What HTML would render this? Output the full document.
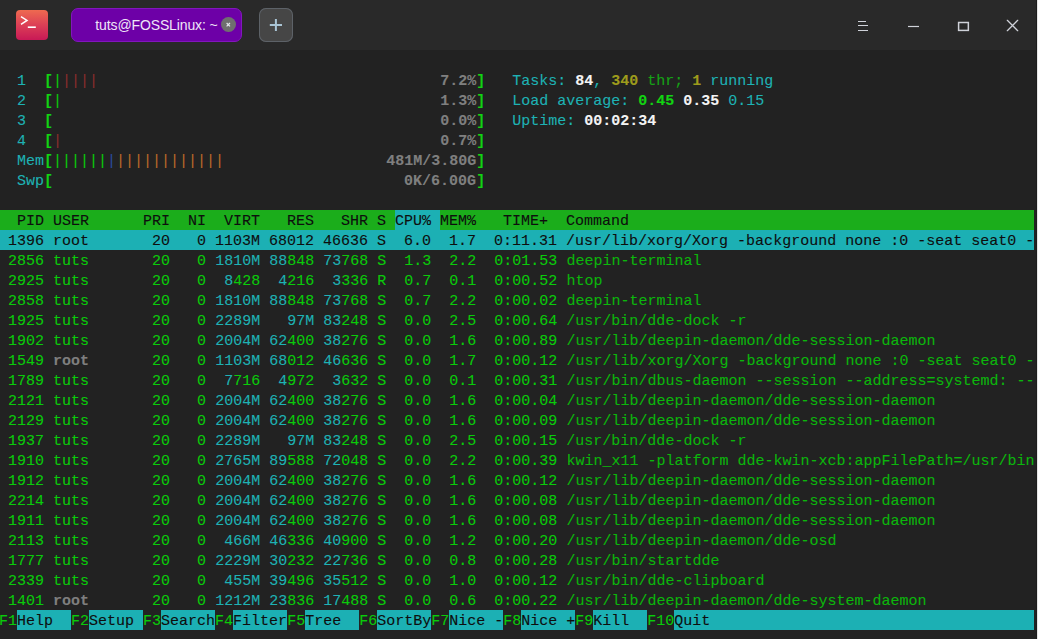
<!DOCTYPE html>
<html><head><meta charset="utf-8"><style>
html,body{margin:0;padding:0;}
body{width:1038px;height:639px;overflow:hidden;background:#222222;position:relative;}
#titlebar{position:absolute;left:0;top:0;width:1038px;height:50px;background:#292929;}
#edge{position:absolute;left:1036px;top:0;width:1px;height:639px;background:#1c1c1c;border-right:1px solid #e6e6e6;}
#term{position:absolute;left:-1px;top:0;width:1036px;height:639px;}
.row{position:absolute;left:0;height:20px;width:1035px;font-family:"Liberation Mono",monospace;font-size:15px;-webkit-text-stroke:0.1px currentColor;line-height:24px;white-space:pre;color:#0acb0a;}
.row.sel{background:#1cb0b4;}
.row.hdr{background:#1bad1b;}
.hc{background:#1cb0b4;}
.k{color:#0e0e0e;}
.kc{color:#0e0e0e;background:#1cb0b4;}
.g{color:#0acb0a;}
.gt{color:#16a216;}
.gb{color:#12d412;font-weight:bold;}
.gbb{color:#12d412;font-weight:bold;}
.ct{color:#1eb2b4;}
.gy{color:#7f7f7f;font-weight:bold;}
.gyb{color:#7f7f7f;font-weight:bold;}
.r{color:#8a2d2d;}
.o{color:#b8692a;}
.b{color:#2a4a9c;}
.ob{color:#9e9c1c;font-weight:bold;}
.wb{color:#f4f4f4;font-weight:bold;}
#appicon{position:absolute;left:16px;top:10px;width:32px;height:30px;border-radius:4px;background:linear-gradient(180deg,#ee6a50 0%,#dc3f56 50%,#c81956 100%);}
#appicon svg{position:absolute;left:0;top:0;}
#tab{position:absolute;left:71px;top:8px;width:169px;height:32px;border-radius:7px;background:#6d00a7;border:1px solid #8216bd;}
#tabtxt{position:absolute;left:23.3px;top:0;line-height:32px;font-family:"Liberation Sans",sans-serif;font-size:14px;letter-spacing:-0.12px;color:#efe6f7;white-space:pre;}
#tabclose{position:absolute;left:148.8px;top:8.2px;width:15px;height:15px;border-radius:50%;background:#6f6f6f;}
#tabclose svg{position:absolute;left:0;top:0;}
#addtab{position:absolute;left:259px;top:8px;width:34px;height:34px;border-radius:7px;background:#464646;box-shadow:inset 0 0 0 1px #5d6268;}
#addtab svg{position:absolute;left:0;top:0;}
.bk{position:absolute;height:20px;}
.cyb{background:#1cb0b4;}
.gc{color:#0cb60c;}

</style></head><body>
<div id="titlebar">
<div id="appicon"><svg width="32" height="30" viewBox="0 0 32 30"><path d="M5 6.6 L11 10.4 L5 14.3" fill="none" stroke="#fff" stroke-width="1.5" stroke-linejoin="miter"/><rect x="11.8" y="16.4" width="8" height="1.6" fill="#fff"/></svg></div>
<div id="tab"><span id="tabtxt">tuts@FOSSLinux: ~</span><div id="tabclose"><svg width="15" height="15" viewBox="0 0 15 15"><path d="M5.6 6.0 L9.0 9.4 M9.0 6.0 L5.6 9.4" stroke="#e4e6ec" stroke-width="1.15"/></svg></div></div>
<div id="addtab"><svg width="34" height="34" viewBox="0 0 34 34"><path d="M16.9 10.9 V23.1 M10.8 17 H23" stroke="#a9c4d4" stroke-width="2"/></svg></div>
<svg id="wctl" width="180" height="50" viewBox="850 0 180 50" style="position:absolute;left:850px;top:0">
<path d="M858 21.5 H866 M858 25.5 H868 M858 30.5 H868" stroke="#cfd2d9" stroke-width="1.1"/>
<path d="M908 26.5 H919" stroke="#cfd2d9" stroke-width="1.2"/>
<rect x="958.6" y="22.5" width="9.75" height="7.9" fill="none" stroke="#cfd2d9" stroke-width="1.5"/>
<path d="M1007.3 20.3 L1017.7 30.7 M1017.7 20.3 L1007.3 30.7" stroke="#cfd2d9" stroke-width="1.25" stroke-linecap="round"/>
</svg>
</div>
<div id="edge"></div>

<div id="term">
<div class="row hdr" style="top:210px"></div><div class="bk cyb" style="top:610px;left:18px;width:54px"></div><div class="bk cyb" style="top:610px;left:90px;width:54px"></div><div class="bk cyb" style="top:610px;left:162px;width:54px"></div><div class="bk cyb" style="top:610px;left:234px;width:54px"></div><div class="bk cyb" style="top:610px;left:306px;width:54px"></div><div class="bk cyb" style="top:610px;left:378px;width:54px"></div><div class="bk cyb" style="top:610px;left:450px;width:54px"></div><div class="bk cyb" style="top:610px;left:522px;width:54px"></div><div class="bk cyb" style="top:610px;left:594px;width:54px"></div><div class="bk cyb" style="top:610px;left:675px;width:360px"></div><div class="bk cyb" style="top:210px;left:396px;width:45px"></div><div class="row" style="top:210px"><span class="k">  PID USER      PRI  NI  VIRT   RES   SHR S CPU% MEM%   TIME+  Command</span></div>
<div class="row" style="top:70px">  <span class="ct">1</span>  <span class="gb">[</span><span class="g">|</span><span class="r">||||</span>                                      <span class="gy">7.2%</span><span class="gb">]</span>   <span class="ct">Tasks: </span><span class="wb">84</span><span class="ct">, </span><span class="ob">340</span><span class="gt"> thr; </span><span class="ob">1</span><span class="ct"> running</span></div>
<div class="row" style="top:90px">  <span class="ct">2</span>  <span class="gb">[</span><span class="g">|</span>                                          <span class="gy">1.3%</span><span class="gb">]</span>   <span class="ct">Load average: </span><span class="gbb">0.45</span> <span class="wb">0.35</span> <span class="ct">0.15</span></div>
<div class="row" style="top:110px">  <span class="ct">3</span>  <span class="gb">[</span>                                           <span class="gy">0.0%</span><span class="gb">]</span>   <span class="ct">Uptime: </span><span class="wb">00:02:34</span></div>
<div class="row" style="top:130px">  <span class="ct">4</span>  <span class="gb">[</span><span class="r">|</span>                                          <span class="gy">0.7%</span><span class="gb">]</span></div>
<div class="row" style="top:150px">  <span class="ct">Mem</span><span class="gb">[</span><span class="g">||||||</span><span class="b">|</span><span class="o">||||||||||||</span>                  <span class="gy">481M/3.80G</span><span class="gb">]</span></div>
<div class="row" style="top:170px">  <span class="ct">Swp</span><span class="gb">[</span>                                       <span class="gy">0K/6.00G</span><span class="gb">]</span></div>
<div class="row sel" style="top:230px"><span class="k"> 1396 root       20   0 1103M 68012 46636 S  6.0  1.7  0:11.31 /usr/lib/xorg/Xorg -background none :0 -seat seat0 -</span></div>
<div class="row" style="top:250px"><span class="g"> 2856</span> <span class="g">tuts     </span> <span class="g"> 20</span> <span class="g">  0</span> <span class="ct">1810M</span> <span class="ct">88</span><span class="g">848</span> <span class="ct">73</span><span class="g">768</span> <span class="g">S</span> <span class="g"> 1.3</span> <span class="g"> 2.2</span> <span class="g"> 0:01.53</span> <span class="gc">deepin-terminal</span></div>
<div class="row" style="top:270px"><span class="g"> 2925</span> <span class="g">tuts     </span> <span class="g"> 20</span> <span class="g">  0</span> <span class="ct"> 8</span><span class="g">428</span> <span class="ct"> 4</span><span class="g">216</span> <span class="ct"> 3</span><span class="g">336</span> <span class="g">R</span> <span class="g"> 0.7</span> <span class="g"> 0.1</span> <span class="g"> 0:00.52</span> <span class="gc">htop</span></div>
<div class="row" style="top:290px"><span class="g"> 2858</span> <span class="g">tuts     </span> <span class="g"> 20</span> <span class="g">  0</span> <span class="ct">1810M</span> <span class="ct">88</span><span class="g">848</span> <span class="ct">73</span><span class="g">768</span> <span class="g">S</span> <span class="g"> 0.7</span> <span class="g"> 2.2</span> <span class="g"> 0:00.02</span> <span class="gc">deepin-terminal</span></div>
<div class="row" style="top:310px"><span class="g"> 1925</span> <span class="g">tuts     </span> <span class="g"> 20</span> <span class="g">  0</span> <span class="ct">2289M</span> <span class="ct">  97M</span> <span class="ct">83</span><span class="g">248</span> <span class="g">S</span> <span class="g"> 0.0</span> <span class="g"> 2.5</span> <span class="g"> 0:00.64</span> <span class="gc">/usr/bin/dde-dock -r</span></div>
<div class="row" style="top:330px"><span class="g"> 1902</span> <span class="g">tuts     </span> <span class="g"> 20</span> <span class="g">  0</span> <span class="ct">2004M</span> <span class="ct">62</span><span class="g">400</span> <span class="ct">38</span><span class="g">276</span> <span class="g">S</span> <span class="g"> 0.0</span> <span class="g"> 1.6</span> <span class="g"> 0:00.89</span> <span class="gc">/usr/lib/deepin-daemon/dde-session-daemon</span></div>
<div class="row" style="top:350px"><span class="g"> 1549</span> <span class="gyb">root     </span> <span class="g"> 20</span> <span class="g">  0</span> <span class="ct">1103M</span> <span class="ct">68</span><span class="g">012</span> <span class="ct">46</span><span class="g">636</span> <span class="g">S</span> <span class="g"> 0.0</span> <span class="g"> 1.7</span> <span class="g"> 0:00.12</span> <span class="gc">/usr/lib/xorg/Xorg -background none :0 -seat seat0 -</span></div>
<div class="row" style="top:370px"><span class="g"> 1789</span> <span class="g">tuts     </span> <span class="g"> 20</span> <span class="g">  0</span> <span class="ct"> 7</span><span class="g">716</span> <span class="ct"> 4</span><span class="g">972</span> <span class="ct"> 3</span><span class="g">632</span> <span class="g">S</span> <span class="g"> 0.0</span> <span class="g"> 0.1</span> <span class="g"> 0:00.31</span> <span class="gc">/usr/bin/dbus-daemon --session --address=systemd: --</span></div>
<div class="row" style="top:390px"><span class="g"> 2121</span> <span class="g">tuts     </span> <span class="g"> 20</span> <span class="g">  0</span> <span class="ct">2004M</span> <span class="ct">62</span><span class="g">400</span> <span class="ct">38</span><span class="g">276</span> <span class="g">S</span> <span class="g"> 0.0</span> <span class="g"> 1.6</span> <span class="g"> 0:00.04</span> <span class="gc">/usr/lib/deepin-daemon/dde-session-daemon</span></div>
<div class="row" style="top:410px"><span class="g"> 2129</span> <span class="g">tuts     </span> <span class="g"> 20</span> <span class="g">  0</span> <span class="ct">2004M</span> <span class="ct">62</span><span class="g">400</span> <span class="ct">38</span><span class="g">276</span> <span class="g">S</span> <span class="g"> 0.0</span> <span class="g"> 1.6</span> <span class="g"> 0:00.09</span> <span class="gc">/usr/lib/deepin-daemon/dde-session-daemon</span></div>
<div class="row" style="top:430px"><span class="g"> 1937</span> <span class="g">tuts     </span> <span class="g"> 20</span> <span class="g">  0</span> <span class="ct">2289M</span> <span class="ct">  97M</span> <span class="ct">83</span><span class="g">248</span> <span class="g">S</span> <span class="g"> 0.0</span> <span class="g"> 2.5</span> <span class="g"> 0:00.15</span> <span class="gc">/usr/bin/dde-dock -r</span></div>
<div class="row" style="top:450px"><span class="g"> 1910</span> <span class="g">tuts     </span> <span class="g"> 20</span> <span class="g">  0</span> <span class="ct">2765M</span> <span class="ct">89</span><span class="g">588</span> <span class="ct">72</span><span class="g">048</span> <span class="g">S</span> <span class="g"> 0.0</span> <span class="g"> 2.2</span> <span class="g"> 0:00.39</span> <span class="gc">kwin_x11 -platform dde-kwin-xcb:appFilePath=/usr/bin</span></div>
<div class="row" style="top:470px"><span class="g"> 1912</span> <span class="g">tuts     </span> <span class="g"> 20</span> <span class="g">  0</span> <span class="ct">2004M</span> <span class="ct">62</span><span class="g">400</span> <span class="ct">38</span><span class="g">276</span> <span class="g">S</span> <span class="g"> 0.0</span> <span class="g"> 1.6</span> <span class="g"> 0:00.12</span> <span class="gc">/usr/lib/deepin-daemon/dde-session-daemon</span></div>
<div class="row" style="top:490px"><span class="g"> 2214</span> <span class="g">tuts     </span> <span class="g"> 20</span> <span class="g">  0</span> <span class="ct">2004M</span> <span class="ct">62</span><span class="g">400</span> <span class="ct">38</span><span class="g">276</span> <span class="g">S</span> <span class="g"> 0.0</span> <span class="g"> 1.6</span> <span class="g"> 0:00.08</span> <span class="gc">/usr/lib/deepin-daemon/dde-session-daemon</span></div>
<div class="row" style="top:510px"><span class="g"> 1911</span> <span class="g">tuts     </span> <span class="g"> 20</span> <span class="g">  0</span> <span class="ct">2004M</span> <span class="ct">62</span><span class="g">400</span> <span class="ct">38</span><span class="g">276</span> <span class="g">S</span> <span class="g"> 0.0</span> <span class="g"> 1.6</span> <span class="g"> 0:00.08</span> <span class="gc">/usr/lib/deepin-daemon/dde-session-daemon</span></div>
<div class="row" style="top:530px"><span class="g"> 2113</span> <span class="g">tuts     </span> <span class="g"> 20</span> <span class="g">  0</span> <span class="ct"> 466M</span> <span class="ct">46</span><span class="g">336</span> <span class="ct">40</span><span class="g">900</span> <span class="g">S</span> <span class="g"> 0.0</span> <span class="g"> 1.2</span> <span class="g"> 0:00.20</span> <span class="gc">/usr/lib/deepin-daemon/dde-osd</span></div>
<div class="row" style="top:550px"><span class="g"> 1777</span> <span class="g">tuts     </span> <span class="g"> 20</span> <span class="g">  0</span> <span class="ct">2229M</span> <span class="ct">30</span><span class="g">232</span> <span class="ct">22</span><span class="g">736</span> <span class="g">S</span> <span class="g"> 0.0</span> <span class="g"> 0.8</span> <span class="g"> 0:00.28</span> <span class="gc">/usr/bin/startdde</span></div>
<div class="row" style="top:570px"><span class="g"> 2339</span> <span class="g">tuts     </span> <span class="g"> 20</span> <span class="g">  0</span> <span class="ct"> 455M</span> <span class="ct">39</span><span class="g">496</span> <span class="ct">35</span><span class="g">512</span> <span class="g">S</span> <span class="g"> 0.0</span> <span class="g"> 1.0</span> <span class="g"> 0:00.12</span> <span class="gc">/usr/bin/dde-clipboard</span></div>
<div class="row" style="top:590px"><span class="g"> 1401</span> <span class="gyb">root     </span> <span class="g"> 20</span> <span class="g">  0</span> <span class="ct">1212M</span> <span class="ct">23</span><span class="g">836</span> <span class="ct">17</span><span class="g">488</span> <span class="g">S</span> <span class="g"> 0.0</span> <span class="g"> 0.6</span> <span class="g"> 0:00.22</span> <span class="gc">/usr/lib/deepin-daemon/dde-system-daemon</span></div>
<div class="row" style="top:610px"><span class="g">F1</span><span class="k">Help  </span><span class="g">F2</span><span class="k">Setup </span><span class="g">F3</span><span class="k">Search</span><span class="g">F4</span><span class="k">Filter</span><span class="g">F5</span><span class="k">Tree  </span><span class="g">F6</span><span class="k">SortBy</span><span class="g">F7</span><span class="k">Nice -</span><span class="g">F8</span><span class="k">Nice +</span><span class="g">F9</span><span class="k">Kill  </span><span class="g">F10</span><span class="k">Quit                                    </span></div>
</div>
</body></html>
